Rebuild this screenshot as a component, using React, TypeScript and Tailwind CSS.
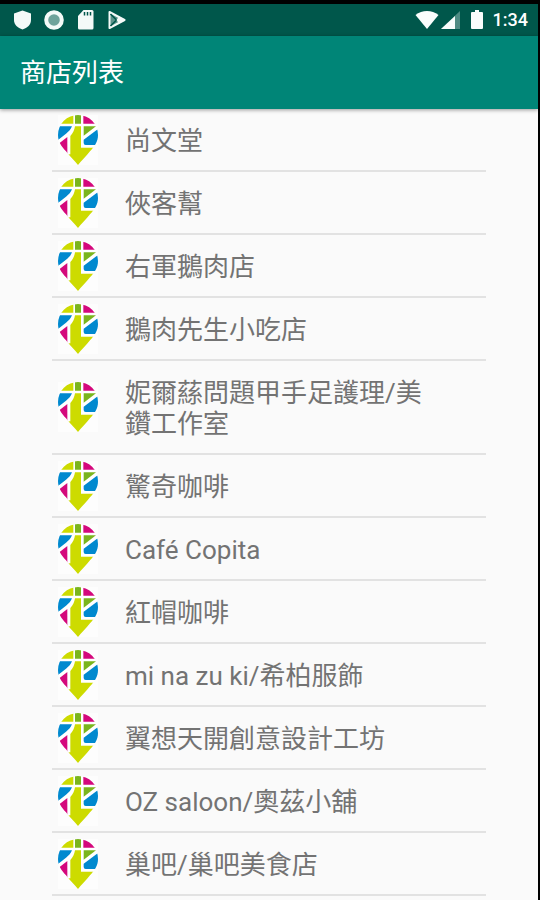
import React from "react";

const shops: string[] = [
  "尚文堂",
  "俠客幫",
  "右軍鵝肉店",
  "鵝肉先生小吃店",
  "妮爾蕬問題甲手足護理/美鑽工作室",
  "驚奇咖啡",
  "Café Copita",
  "紅帽咖啡",
  "mi na zu ki/希柏服飾",
  "翼想天開創意設計工坊",
  "OZ saloon/奧茲小舖",
  "巢吧/巢吧美食店",
];

function StatusBar() {
  return (
    <div className="flex h-8 items-center justify-between bg-[#00574b] pl-3 pr-[10px] text-white">
      <div className="flex items-center gap-2">
        <svg viewBox="0 0 24 24" className="h-6 w-6" fill="#f4faf8">
          <path d="M10.5 2.5 L19 5.5 V12 C19 16.8 15.3 20 10.5 21.5 C5.7 20 2 16.8 2 12 V5.5 Z" />
        </svg>
        <svg viewBox="0 0 24 24" className="h-6 w-6">
          <circle cx="10" cy="12" r="7.8" fill="#6fa39b" stroke="#f4faf8" strokeWidth="4" />
        </svg>
        <svg viewBox="0 0 24 24" className="h-6 w-6" fill="#f4faf8">
          <path d="M7.5 2 H16 Q17.5 2 17.5 3.5 V20 Q17.5 21.5 16 21.5 H3.5 Q2 21.5 2 20 V8 Z" />
          <path d="M8.5 4 V7.5 M11.5 4 V7.5 M14.5 4 V7.5" stroke="#00574b" strokeWidth="1.5" />
        </svg>
        <svg viewBox="0 0 24 24" className="h-6 w-6" fill="none">
          <path d="M1.5 4 L16.5 12 L1.5 20 Z" fill="#5b928a" stroke="#f4faf8" strokeWidth="2" strokeLinejoin="round" />
          <path d="M2.5 6 L8.5 12 L2.5 18" stroke="#00574b" strokeWidth="1.5" />
          <path d="M11 8.5 L17.5 12 L11 15.5 L8.5 12 Z" fill="#f4faf8" />
        </svg>
      </div>
      <div className="flex items-center">
        <svg viewBox="0 0 24 20" className="h-5 w-6" fill="#f9fdfc">
          <path d="M0.5 5 C7 -0.5 17 -0.5 23.5 5 L12 19 Z" />
        </svg>
        <svg viewBox="0 0 20 20" className="ml-[2px] h-5 w-5">
          <path d="M19 1 V19 H0 Z" fill="#4f8b83" />
          <path d="M14 6 V19 H0 Z" fill="#f9fdfc" />
        </svg>
        <svg viewBox="0 0 12 20" className="ml-[10px] h-5 w-3" fill="#f9fdfc">
          <path d="M4 0 H8 V2 H11 Q12 2 12 3 V18 Q12 19 11 19 H1 Q0 19 0 18 V3 Q0 2 1 2 H4 Z" />
        </svg>
        <span className="ml-[10px] font-['Roboto'] text-lg font-medium">1:34</span>
      </div>
    </div>
  );
}

function PinLogo() {
  return (
    <svg viewBox="0 0 120 150" className="h-[50px] w-10 shrink-0 bg-[#fdfdfd]">
      <defs>
        <clipPath id="pin">
          <path d="M60 150 C50 138 36 124 24 109 C10 94 0 80 0 60 A60 60 0 0 1 120 60 C120 80 110 94 96 109 C84 124 70 138 60 150 Z" />
        </clipPath>
      </defs>
      <g clipPath="url(#pin)">
        <path d="M0 0 H120 V96 H0 Z" fill="#ffffff" />
        <path d="M0 0 H46 V26 H0 Z" fill="#cddb00" />
        <path d="M51 0 H69 V26 H51 Z" fill="#7ab51d" />
        <path d="M76 0 H120 V26 H76 Z" fill="#d4087c" />
        <path d="M0 34 H42 C38 44 32 50 24 56 L0 75 Z" fill="#0089cf" />
        <path d="M0 88 L28 66 V125 H0 Z" fill="#d4087c" />
        <path d="M51 34 H69 V98 H120 V150 H0 V122 L37 118 V63 C45 55 49 46 51 34 Z" fill="#cddb00" />
        <path d="M77 34 H114 L77 62 Z" fill="#7ab51d" />
        <path d="M120 42 V90 H83 Q77 90 77 84 V74 Z" fill="#0089cf" />
      </g>
    </svg>
  );
}

function ShopRow({ name }: { name: string }) {
  return (
    <li className="border-b-2 border-[#e2e2e2]">
      <a href="#" className="flex items-center pl-[6px] pr-10">
        <PinLogo />
        <span className="ml-[27px] pb-[13px] pt-[17px] leading-[31px]">{name}</span>
      </a>
    </li>
  );
}

export default function App() {
  return (
    <div className="min-h-screen border-r-2 border-t-4 border-black bg-[#fafafa] font-['Roboto','Noto_Sans_CJK_TC',sans-serif]">
      <StatusBar />
      <header className="relative flex h-[73px] items-center bg-[#008577] px-5 shadow-[0_1px_4px_rgba(0,0,0,0.4)]">
        <h1 className="text-[26px] leading-8 text-white">商店列表</h1>
      </header>
      <main className="px-[52px] text-[26px] text-[#737373]">
        <ul>
          {shops.map((name) => (
            <ShopRow key={name} name={name} />
          ))}
        </ul>
      </main>
    </div>
  );
}
